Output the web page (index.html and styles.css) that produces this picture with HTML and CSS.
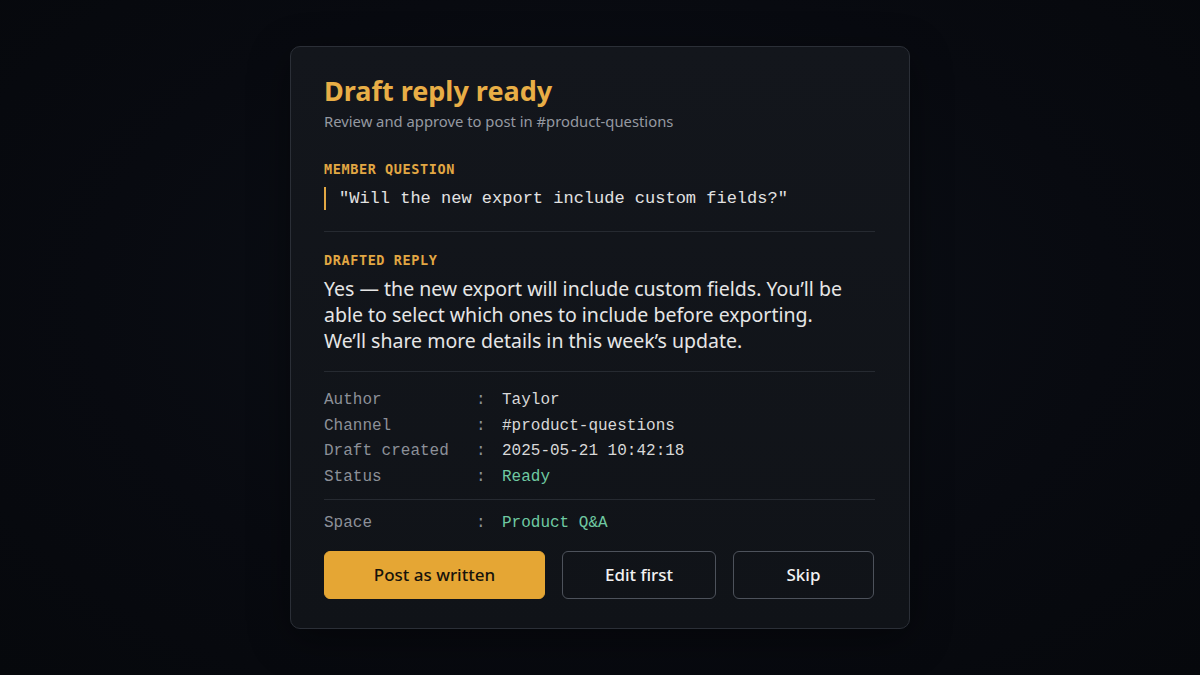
FILE: index.html
```html
<!DOCTYPE html>
<html lang="en">
<head>
<meta charset="utf-8">
<title>Draft reply ready</title>
<link rel="stylesheet" href="styles.css">
</head>
<body>
<main class="stage">
  <section class="card">
    <header class="head">
      <h1 class="title">Draft reply ready</h1>
      <p class="subtitle">Review and approve to post in #product-questions</p>
    </header>

    <div class="block block-question">
      <div class="label">MEMBER QUESTION</div>
      <blockquote class="question">"Will the new export include custom fields?"</blockquote>
    </div>

    <hr class="rule rule-q">

    <div class="block">
      <div class="label">DRAFTED REPLY</div>
      <p class="reply">Yes — the new export will include custom fields. You’ll be able to select which ones to include before exporting. We’ll share more details in this week’s update.</p>
    </div>

    <hr class="rule rule-r">

    <dl class="meta">
      <dt>Author</dt><dd class="sep">:</dd><dd class="val">Taylor</dd>
      <dt>Channel</dt><dd class="sep">:</dd><dd class="val">#product-questions</dd>
      <dt>Draft created</dt><dd class="sep">:</dd><dd class="val">2025-05-21 10:42:18</dd>
      <dt>Status</dt><dd class="sep">:</dd><dd class="val ok">Ready</dd>
    </dl>

    <hr class="rule rule-tight">

    <dl class="meta">
      <dt>Space</dt><dd class="sep">:</dd><dd class="val ok">Product Q&amp;A</dd>
    </dl>

    <div class="actions">
      <button class="btn btn-primary">Post as written</button>
      <button class="btn btn-ghost btn-edit">Edit first</button>
      <button class="btn btn-ghost btn-skip">Skip</button>
    </div>
  </section>
</main>
</body>
</html>
```

FILE: styles.css
```css
* { box-sizing: border-box; }

html, body {
  margin: 0;
  padding: 0;
  height: 100%;
}

body {
  background: radial-gradient(ellipse at 50% 45%, #0c1017 0%, #080a10 60%, #06080c 100%);
  font-family: "Noto Sans", "Open Sans", sans-serif;
  color: #e4e4e4;
}

.stage {
  height: 675px;
  display: flex;
  justify-content: center;
  align-items: flex-start;
  padding-top: 46px;
}

.card {
  width: 620px;
  height: 583px;
  border: 1px solid #2b2f37;
  border-radius: 10px;
  background: linear-gradient(180deg, #13161c 0%, #101318 100%);
  padding: 24px 34px 0 33px;
  box-shadow: 0 10px 40px rgba(0, 0, 0, 0.4);
}

.head { margin: 0; }

.title {
  margin: 0;
  font-size: 27px;
  line-height: 40px;
  font-weight: 700;
  color: #e8ae46;
}

.subtitle {
  margin: 0;
  font-size: 14.8px;
  line-height: 20px;
  color: #9599a1;
}

.block { margin: 0; }

.label {
  font-family: "DejaVu Sans Mono", "Liberation Mono", monospace;
  font-weight: 700;
  font-size: 13.5px;
  letter-spacing: 0.6px;
  line-height: 20px;
  color: #e2a743;
}

.block-question .label { margin-top: 28px; }

.question {
  margin: 8px 0 0;
  padding: 1px 0 1px 13px;
  border-left: 2px solid #e2a743;
  font-family: "Liberation Mono", "DejaVu Sans Mono", monospace;
  font-size: 17px;
  line-height: 21px;
  color: #e2e2e2;
}

.rule {
  border: 0;
  border-top: 1px solid #262a31;
  height: 0;
}

.rule-q { margin: 21px 0 18px; }
.rule-r { margin: 17px 0 16px; }
.rule-tight { margin: 8px 0 11px; }

.reply {
  margin: 6px 0 0;
  max-width: 530px;
  font-size: 19.5px;
  line-height: 26px;
  color: #e6e6e6;
}

.meta {
  margin: 0;
  display: grid;
  grid-template-columns: 152px 26px 1fr;
  font-family: "Liberation Mono", "DejaVu Sans Mono", monospace;
  font-size: 16px;
  line-height: 25.7px;
}

.meta dt { color: #8c9098; }
.meta dd { margin: 0; }
.meta .sep { color: #8c9098; }
.meta .val { color: #d8d8d8; }
.meta .val.ok { color: #6fc9a2; }

.actions {
  display: flex;
  gap: 17px;
  margin-top: 14px;
}

.btn {
  height: 48px;
  border-radius: 6px;
  font-family: "Noto Sans", "Open Sans", sans-serif;
  font-size: 17px;
  font-weight: 500;
  cursor: pointer;
}

.btn-primary {
  width: 221px;
  background: #e5a634;
  border: 1px solid #e5a634;
  color: #17130b;
}

.btn-ghost {
  background: transparent;
  border: 1px solid #4d525b;
  color: #f2f2f2;
}

.btn-edit { width: 154px; }
.btn-skip { width: 141px; }
```
